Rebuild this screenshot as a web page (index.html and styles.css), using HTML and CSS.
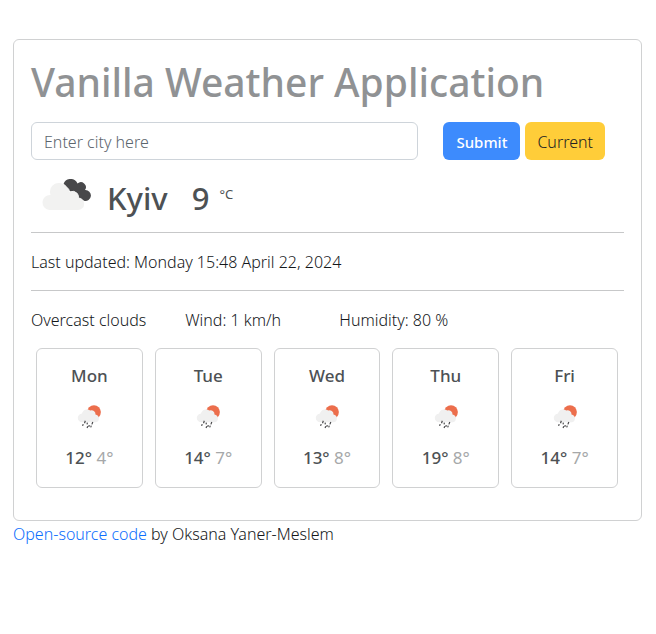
FILE: index.html
```html
<!DOCTYPE html>
<html lang="en">
<head>
<meta charset="utf-8">
<title>Vanilla Weather Application</title>
<link rel="stylesheet" href="styles.css">
</head>
<body>
<svg class="sprite" aria-hidden="true">
  <symbol id="rain" viewBox="0 0 50 50">
    <circle cx="30" cy="18.500" r="11.5" fill="#ec6e4c"/>
    <path d="M10.500 35.500a7.300 7.300 0 0 1-.5-14.600 8.500 8.500 0 0 1 13.500-5 6.500 6.500 0 0 1 9 6.600 6.700 6.700 0 0 1 1 13z" fill="#f0f0f0"/>
    <path d="M15.500 33l-1.300 4M12 38.500l-1 3M19 36l-.6 3M22 40l-.6 3M19.500 42l-1 3M28 35l-1.500 4M25.500 41l-1 3" stroke="#48484a" stroke-width="2" fill="none"/>
  </symbol>
</svg>
<main class="page">
  <section class="card">
    <h1>Vanilla Weather Application</h1>
    <form class="search">
      <input class="city-input" type="text" placeholder="Enter city here" aria-label="City">
      <div class="actions">
        <button class="btn btn-primary" type="submit">Submit</button>
        <button class="btn btn-warning" type="button">Current</button>
      </div>
    </form>
    <div class="current">
      <svg class="current-icon" viewBox="0 0 50 32" aria-hidden="true">
        <path d="M21.500 5a7.500 7.500 0 0 1 14-.5 5 5 0 0 1 7.500 6.500 5.500 5.500 0 1 1-1 10.800l-10-5z" fill="#48484a"/>
        <path d="M7.500 31a7.500 7.500 0 0 1 1-15A9 9 0 0 1 24.500 8q3 2 2.800 5 5-2 8 1.500 1.500 2 1 4.500a5.700 5.700 0 0 1-.3 12z" fill="#f2f2f1" stroke="#fff" stroke-width="1" paint-order="stroke"/>
      </svg>
      <h2 class="city">Kyiv</h2>
      <span class="degrees">9</span>
      <span class="unit">°C</span>
    </div>
    <hr>
    <p>Last updated: Monday 15:48 April 22, 2024</p>
    <hr>
    <ul class="details">
      <li>Overcast clouds</li>
      <li>Wind: 1 km/h</li>
      <li>Humidity: 80 %</li>
    </ul>
    <div class="forecast">
      <article class="day"><h3>Mon</h3><svg class="day-icon"><use href="#rain"/></svg><p class="temps">12° <span class="low">4°</span></p></article>
      <article class="day"><h3>Tue</h3><svg class="day-icon"><use href="#rain"/></svg><p class="temps">14° <span class="low">7°</span></p></article>
      <article class="day"><h3>Wed</h3><svg class="day-icon"><use href="#rain"/></svg><p class="temps">13° <span class="low">8°</span></p></article>
      <article class="day"><h3>Thu</h3><svg class="day-icon"><use href="#rain"/></svg><p class="temps">19° <span class="low">8°</span></p></article>
      <article class="day"><h3>Fri</h3><svg class="day-icon"><use href="#rain"/></svg><p class="temps">14° <span class="low">7°</span></p></article>
    </div>
  </section>
  <footer><a href="#">Open-source code</a> by Oksana Yaner-Meslem</footer>
</main>
</body>
</html>
```
FILE: styles.css
```css
* { box-sizing: border-box; }
body {
  margin: 0;
  background: #fff;
  color: #14171a;
  font-family: "Segoe UI", "Noto Sans", "Open Sans", sans-serif;
  font-size: 16px;
  font-weight: 300;
  line-height: 24px;
}
h1, h2, h3, p, ul { margin: 0; padding: 0; }
.sprite { display: none; }
.page { padding: 39px 14px 0 13px; }
.card {
  padding: 18px 17px 32px;
  border: 1px solid #d0d1d2;
  border-radius: 6px;
}
h1 {
  color: #909294;
  font-size: 39px;
  font-weight: 500;
  line-height: 48px;
  white-space: nowrap;
}
.search {
  display: flex;
  gap: 25px;
  margin: 16px 19px 0 0;
}
.city-input {
  flex: 1;
  min-width: 0;
  height: 38px;
  padding: 2px 12px 0;
  border: 1px solid #ced4da;
  border-radius: 6px;
  background: #fff;
  color: #212529;
  font: inherit;
}
.city-input::placeholder { color: #5c656d; opacity: 1; }
.actions { display: flex; gap: 5px; }
.btn {
  height: 38px;
  padding: 2px 12px 0;
  border: 0;
  border-radius: 6px;
  font: inherit;
}
.btn-primary { padding: 2px 13px 0; background: #3d8bfd; color: #fff; font-size: 15px; font-weight: 500; }
.btn-warning { background: #ffcd39; color: #222; }
.current {
  display: flex;
  align-items: center;
  height: 72px;
  padding: 4px 0 0 11px;
  color: #4d5154;
}
.current-icon { width: 50px; height: 32px; margin: 0 15px 6px 0; }
.city, .degrees { font-size: 31px; font-weight: 500; line-height: 40px; }
.degrees { margin-left: 24px; }
.unit { margin: 0 0 8px 10px; font-size: 13px; font-weight: 400; }
hr { height: 1px; margin: 0 0 17px; border: 0; background: #c7c8c9; }
hr + p { margin-bottom: 16px; }
.details { display: flex; list-style: none; }
.details li { flex: 0 0 26%; }
.forecast {
  display: grid;
  grid-template-columns: repeat(5, 1fr);
  gap: 12px;
  margin: 16px 6px 0 5px;
}
.day {
  display: flex;
  flex-direction: column;
  align-items: center;
  height: 140px;
  padding: 15px 0;
  border: 1px solid #d0d1d2;
  border-radius: 6px;
  color: #4d5154;
}
.day h3 { font-size: 17px; font-weight: 500; line-height: 24px; }
.day-icon { width: 30px; height: 30px; margin: 13px 0 15px 4px; }
.temps { font-size: 17px; font-weight: 500; }
.low { color: #a6a8a9; font-weight: 400; }
footer { padding-top: 1px; }
a { color: #0d6efd; text-decoration: none; }
```
